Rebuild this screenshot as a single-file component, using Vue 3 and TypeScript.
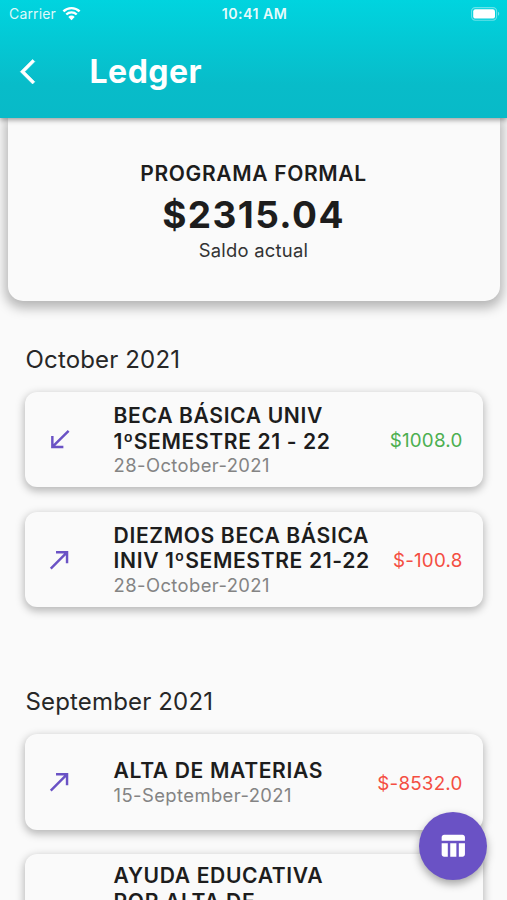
<script setup lang="ts">
interface Entry {
  id: number
  lines: string[]
  date: string
  amount: string
  credit: boolean
}

interface Month {
  label: string
  entries: Entry[]
}

const months: Month[] = [
  {
    label: 'October 2021',
    entries: [
      { id: 1, lines: ['BECA BÁSICA UNIV', '1ºSEMESTRE 21 - 22'], date: '28-October-2021', amount: '$1008.0', credit: true },
      { id: 2, lines: ['DIEZMOS BECA BÁSICA', 'INIV 1ºSEMESTRE 21-22'], date: '28-October-2021', amount: '$-100.8', credit: false },
    ],
  },
  {
    label: 'September 2021',
    entries: [
      { id: 3, lines: ['ALTA DE MATERIAS'], date: '15-September-2021', amount: '$-8532.0', credit: false },
      { id: 4, lines: ['AYUDA EDUCATIVA', 'POR ALTA DE'], date: '', amount: '', credit: true },
    ],
  },
]
</script>

<template>
  <div class="screen">
    <header class="top">
      <div class="status">
        <div class="carrier">
          <span>Carrier</span>
          <svg class="wifi" viewBox="0 0 19 15">
            <path d="M1.4 5.4a11.6 11.6 0 0 1 16.2 0" />
            <path d="M4.3 8.5a7.5 7.5 0 0 1 10.4 0" />
            <path class="dot" d="M9.5 14.2 6.3 10.9a4.6 4.6 0 0 1 6.4 0z" />
          </svg>
        </div>
        <span class="clock">10:41 AM</span>
        <svg class="battery" viewBox="0 0 29 14">
          <rect class="shell" x="0.6" y="0.6" width="25" height="12.6" rx="3.6" />
          <rect class="charge" x="2.2" y="2.2" width="21.8" height="9.4" rx="2.2" />
          <path class="tip" d="M27 4.8v4c1.7-.6 1.7-3.4 0-4z" />
        </svg>
      </div>
      <div class="bar">
        <button class="back" aria-label="Back">
          <svg class="icon" viewBox="0 0 24 24"><path d="M17.77 3.77 16 2 6 12l10 10 1.77-1.77L9.54 12z" /></svg>
        </button>
        <h1 class="title">Ledger</h1>
      </div>
    </header>

    <main class="content">
      <section class="summary">
        <div class="program">PROGRAMA FORMAL</div>
        <div class="balance">$2315.04</div>
        <div class="caption">Saldo actual</div>
      </section>

      <section v-for="month in months" :key="month.label" class="month">
        <h2 class="month-label">{{ month.label }}</h2>
        <article v-for="entry in month.entries" :key="entry.id" class="card" :class="{ tall: !entry.date }">
          <svg class="icon arrow" viewBox="0 0 24 24">
            <path v-if="entry.credit" d="M20 5.41 18.59 4 7 15.59V9H5v10h10v-2H8.41z" />
            <path v-else d="M9 5v2h6.59L4 18.59 5.41 20 17 8.41V15h2V5z" />
          </svg>
          <div class="info">
            <div v-for="line in entry.lines" :key="line" class="name">{{ line }}</div>
            <div v-if="entry.date" class="date">{{ entry.date }}</div>
          </div>
          <div v-if="entry.amount" class="amount" :class="entry.credit ? 'credit' : 'debit'">{{ entry.amount }}</div>
        </article>
      </section>
    </main>

    <button class="fab" aria-label="Table view">
      <svg class="icon" viewBox="0 0 24 24">
        <path d="M10 10.02h5V21h-5zM17 21h3c1.1 0 2-.9 2-2v-9h-5v11zm3-18H5c-1.1 0-2 .9-2 2v3h19V5c0-1.1-.9-2-2-2zM3 19c0 1.1.9 2 2 2h3V10H3v9z" />
      </svg>
    </button>
  </div>
</template>

<style>
body {
  margin: 0;
  background: #fafafa;
}
</style>

<style scoped>
.screen {
  position: relative;
  width: 507px;
  height: 900px;
  overflow: hidden;
  display: flex;
  flex-direction: column;
  background: #fafafa;
  color: #1d1d1d;
  font-family: Inter, Roboto, sans-serif;
}
.icon {
  display: block;
  width: 29.4px;
  height: 29.4px;
  fill: currentColor;
}
button {
  border: 0;
  padding: 0;
  background: none;
  color: #fff;
}
.top {
  position: relative;
  z-index: 1;
  flex: none;
  height: 118px;
  background: linear-gradient(#00d4df 0%, #08bcc9 72%, #08bac8 100%);
  box-shadow: 0 2px 5px rgba(0, 0, 0, 0.38);
  color: #fff;
}
.status {
  display: grid;
  grid-template-columns: 1fr auto 1fr;
  align-items: center;
  height: 27px;
  padding: 0 7px 0 9px;
  font-size: 14px;
}
.carrier {
  display: flex;
  align-items: center;
  gap: 6px;
  letter-spacing: 0.15px;
  color: rgba(255, 255, 255, 0.88);
}
.wifi {
  width: 19px;
  height: 15px;
  fill: none;
  stroke: #fff;
  stroke-width: 2.4;
}
.wifi .dot {
  fill: #fff;
  stroke: none;
}
.clock {
  font-weight: 600;
  font-size: 14.2px;
  letter-spacing: 0.45px;
  color: rgba(255, 255, 255, 0.92);
}
.battery {
  justify-self: end;
  width: 29px;
  height: 14px;
  fill: #fff;
}
.battery .shell {
  fill: none;
  stroke: rgba(255, 255, 255, 0.4);
  stroke-width: 1.1;
}
.battery .tip {
  fill: rgba(255, 255, 255, 0.45);
}
.bar {
  display: flex;
  align-items: center;
  height: 90px;
  padding-left: 13.1px;
}
.back .icon {
  stroke: currentColor;
  stroke-width: 0.5;
}
.title {
  margin: 0 0 0 47px;
  font-size: 32px;
  font-weight: 700;
  line-height: 40px;
  letter-spacing: 0.5px;
}
.content {
  flex: 1;
  min-height: 0;
}
.summary {
  height: 183px;
  box-sizing: border-box;
  margin: 0 7.5px;
  padding-top: 42px;
  border-radius: 0 0 15px 15px;
  background: #fafafa;
  box-shadow: 0 4px 12px 3px rgba(0, 0, 0, 0.28);
  text-align: center;
}
.program {
  font-size: 21px;
  font-weight: 600;
  line-height: 27px;
  letter-spacing: 0.65px;
}
.balance {
  margin-top: 4px;
  font-size: 37px;
  font-weight: 700;
  line-height: 48px;
  letter-spacing: 1.4px;
}
.caption {
  margin-top: -0.5px;
  font-size: 18.4px;
  line-height: 22px;
  letter-spacing: 0.25px;
  color: #333;
}
.month {
  display: flex;
  flex-direction: column;
  padding: 43px 24.5px 34.5px;
}
.month + .month {
  padding-top: 45px;
}
.month-label {
  margin: 0 0 17px 1px;
  font-size: 24px;
  font-weight: 400;
  line-height: 31px;
  letter-spacing: 0.16px;
  color: #272727;
}
.card {
  box-sizing: border-box;
  display: grid;
  grid-template-columns: 69.1px 1fr auto;
  align-items: center;
  flex: none;
  height: 95.3px;
  padding: 0 20px;
  border-radius: 12px;
  background: #fafafa;
  box-shadow: 0 3px 8px 1px rgba(0, 0, 0, 0.27);
}
.card + .card {
  margin-top: 24.3px;
}
.card.tall {
  height: 121px;
}
.tall .info {
  align-self: start;
  padding-top: 9.5px;
}
.info {
  padding-top: 1px;
  white-space: nowrap;
}
.name {
  font-size: 21.1px;
  font-weight: 600;
  line-height: 25.7px;
  letter-spacing: 0.62px;
}
.date {
  font-size: 18.4px;
  line-height: 23px;
  letter-spacing: 0.42px;
  color: #848484;
}
.arrow {
  color: #6a52c5;
}
.amount {
  padding-top: 2px;
  font-size: 18.8px;
  letter-spacing: 0.2px;
}
.credit {
  color: #4caf50;
}
.debit {
  color: #f44e42;
}
.fab {
  position: absolute;
  right: 19.7px;
  bottom: 19.7px;
  z-index: 2;
  display: grid;
  place-items: center;
  width: 68.6px;
  height: 68.6px;
  border-radius: 50%;
  background: #6a52c5;
  box-shadow: 0 4px 9px rgba(0, 0, 0, 0.35);
}
</style>
